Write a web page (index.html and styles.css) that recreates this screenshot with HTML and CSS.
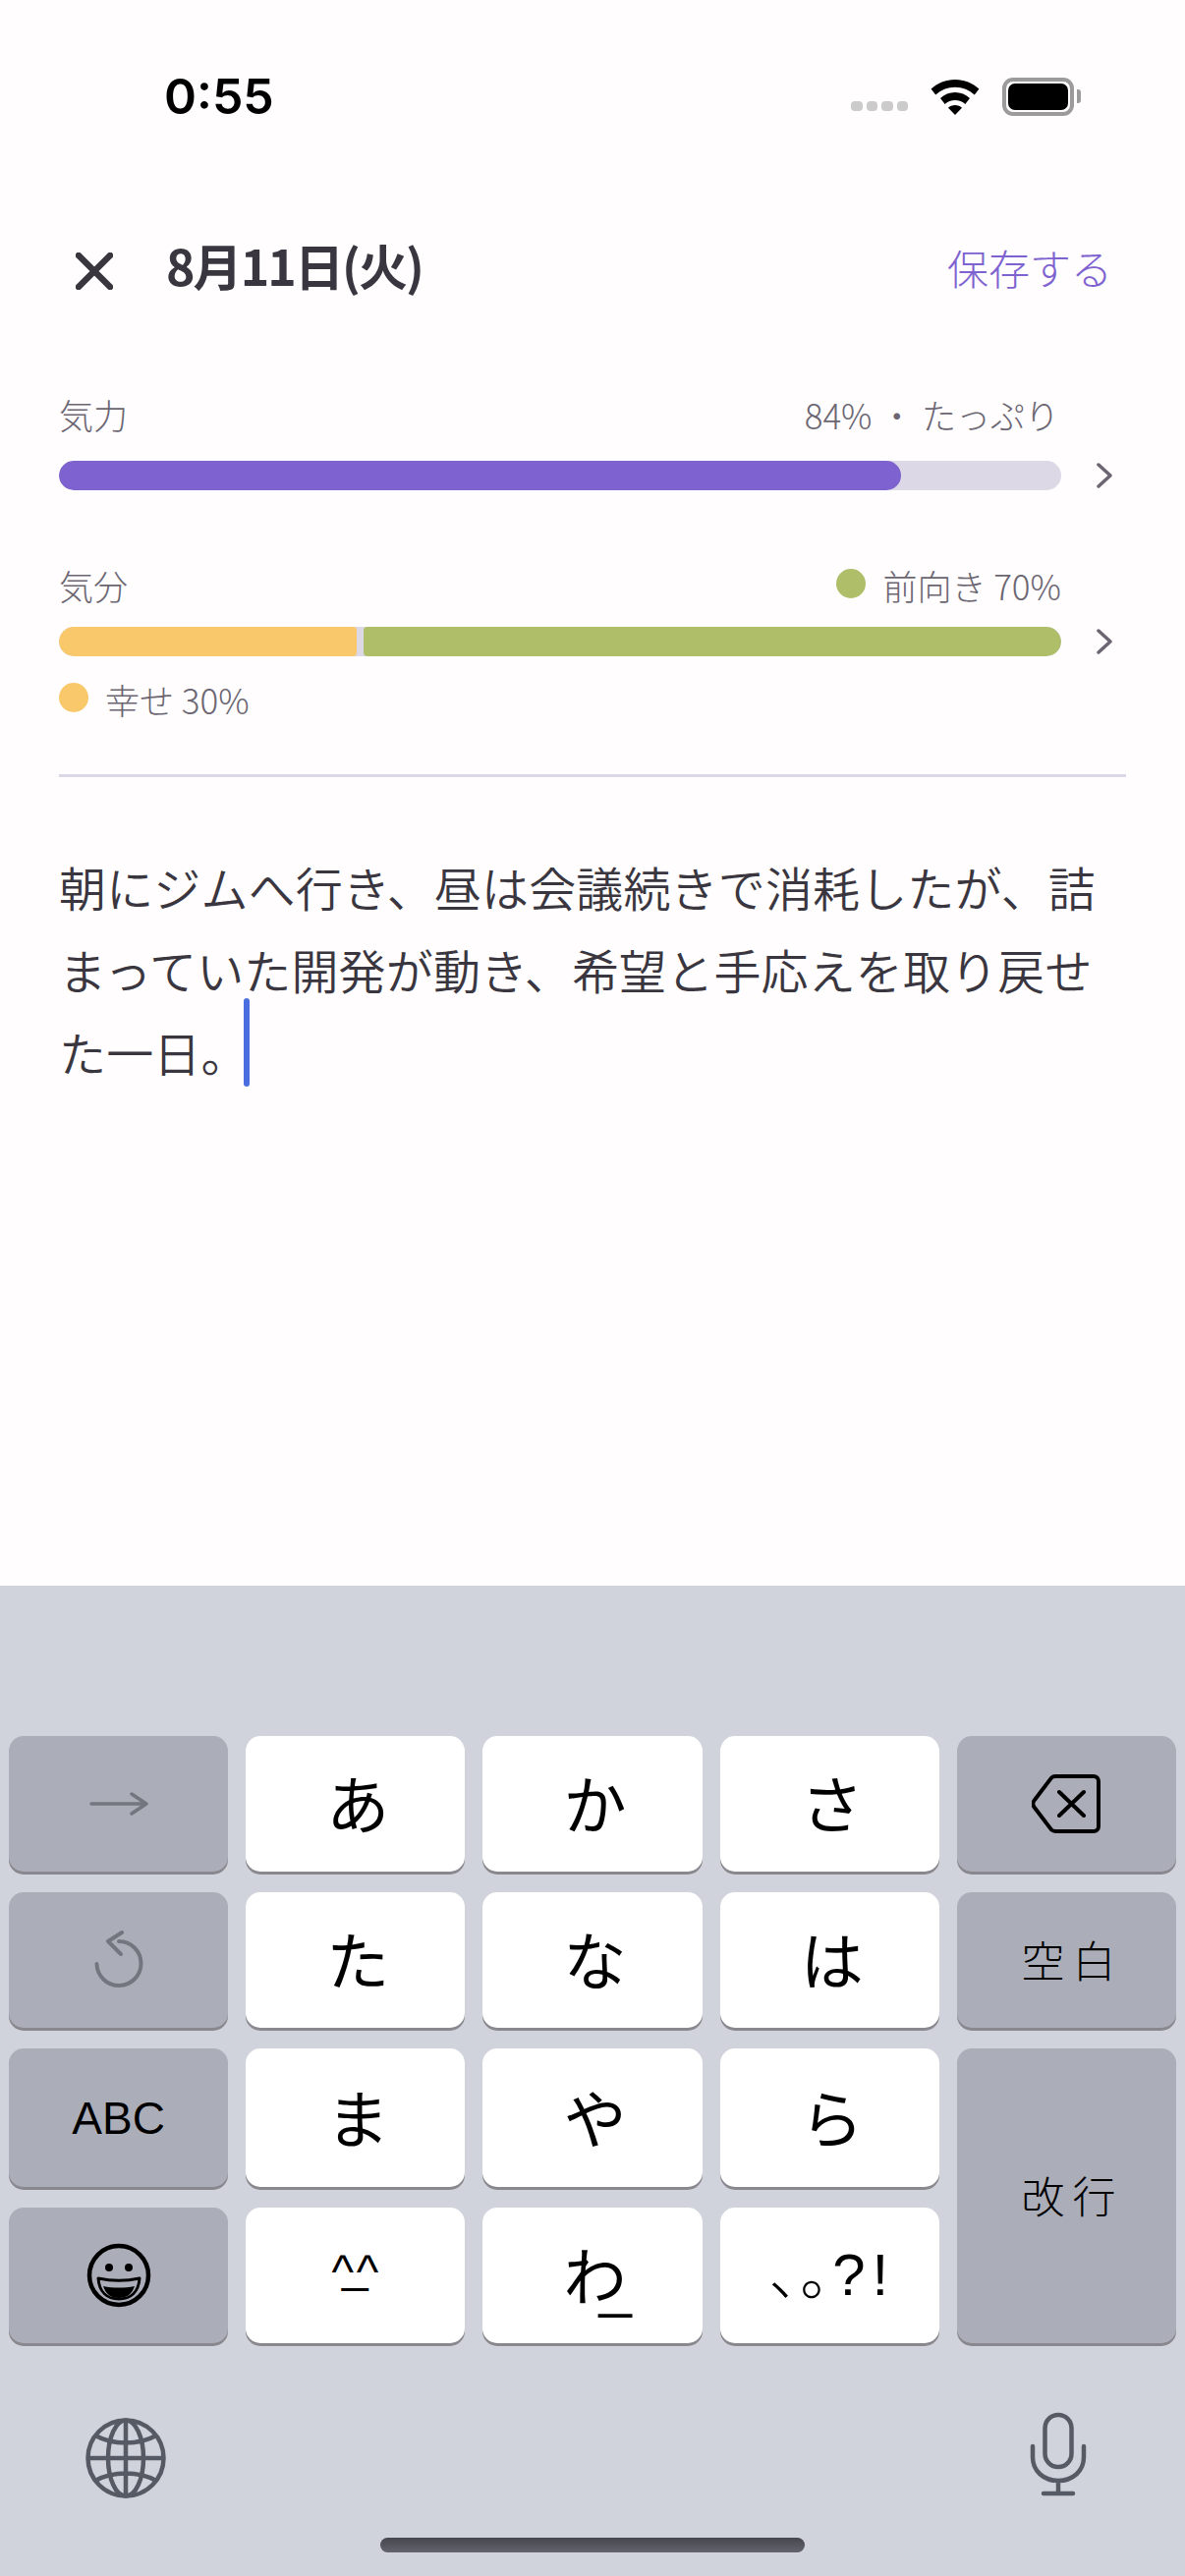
FILE: index.html
```html
<!DOCTYPE html>
<html lang="ja">
<head>
<meta charset="utf-8">
<title>8月11日(火)</title>
<link rel="stylesheet" href="styles.css">
</head>
<body>
<div class="screen">
  <div class="status">
    <span class="time">0:55</span>
    <div class="status-icons">
      <div class="signal"><i></i><i></i><i></i><i></i></div>
      <svg class="wifi" width="50" height="38" viewBox="0 0 50 38"><path d="M25 2C15.5 2 7 5.7.6 11.6l4.6 6C10.4 12.7 17.3 9.7 25 9.7s14.600 3 19.800 7.900l4.600-6C43 5.700 34.500 2 25 2zM25 15c-5.800 0-11 2.200-15 5.900l4.700 6c2.700-2.400 6.300-3.900 10.300-3.900s7.600 1.500 10.300 3.900l4.700-6C36 17.200 30.800 15 25 15zM25 28c-2.700 0-5.200 1-7 2.700L25 38l7-7.300C30.200 29 27.700 28 25 28z" fill="#000"/></svg>
      <div class="battery"><div class="battery-body"><div class="battery-level"></div></div><div class="battery-nub"></div></div>
    </div>
  </div>
  <header class="head">
    <svg class="close" width="38" height="38" viewBox="0 0 38 38"><path d="M3 3l32 32M35 3L3 35" stroke="#3a3640" stroke-width="6.500" stroke-linecap="round" fill="none"/></svg>
    <h1 class="title">8月11日(火)</h1>
    <span class="save">保存する</span>
  </header>
  <main class="content">
    <section class="metric first">
      <div class="labels"><span>気力</span><span class="energy-val">84% ・ たっぷり</span></div>
      <div class="bar-row">
        <div class="bar"><div class="seg purple" style="width:84%"></div></div>
        <svg class="chev" width="16" height="26" viewBox="0 0 16 26"><path d="M2 2l12 11L2 24" stroke="#6b6672" stroke-width="3.500" fill="none" stroke-linecap="round" stroke-linejoin="round"/></svg>
      </div>
    </section>
    <section class="metric second">
      <div class="labels tight"><span>気分</span><span class="legend"><i class="dot green"></i>前向き 70%</span></div>
      <div class="bar-row">
        <div class="bar split"><div class="seg yellow" style="width:303px"></div><div class="seg green rest"></div></div>
        <svg class="chev" width="16" height="26" viewBox="0 0 16 26"><path d="M2 2l12 11L2 24" stroke="#6b6672" stroke-width="3.500" fill="none" stroke-linecap="round" stroke-linejoin="round"/></svg>
      </div>
      <div class="labels below"><span class="legend"><i class="dot yellow"></i>幸せ 30%</span></div>
    </section>
    <hr class="rule">
    <p class="note">朝にジムへ行き、昼は会議続きで消耗したが、詰まっていた開発が動き、希望と手応えを取り戻せた一日。<span class="caret"></span></p>
  </main>
  <div class="keyboard">
    <div class="keys">
      <div class="key fn"><svg width="60" height="24" viewBox="0 0 60 24"><path d="M2 12h55M43 2l15 10-15 10" stroke="#74767f" stroke-width="3.500" fill="none" stroke-linecap="round" stroke-linejoin="round"/></svg></div>
      <div class="key">あ</div>
      <div class="key">か</div>
      <div class="key">さ</div>
      <div class="key fn"><svg width="70" height="60" viewBox="0 0 70 60"><path d="M24 2h39a5 5 0 0 1 5 5v46a5 5 0 0 1-5 5H24a6 6 0 0 1-4-1.600L3 34a6 6 0 0 1 0-8L20 3.600A6 6 0 0 1 24 2zM28 18l25 24M53 18L28 42" stroke="#000" stroke-width="4" fill="none" stroke-linecap="round" stroke-linejoin="round"/></svg></div>
      <div class="key fn"><svg width="50" height="60" viewBox="0 0 50 60"><path d="M25 11a22.500 22.500 0 1 1-22.500 23M28 2L14 11l13 13" stroke="#74767f" stroke-width="4" fill="none" stroke-linecap="round" stroke-linejoin="round"/></svg></div>
      <div class="key">た</div>
      <div class="key">な</div>
      <div class="key">は</div>
      <div class="key fn small">空白</div>
      <div class="key fn abc">ABC</div>
      <div class="key">ま</div>
      <div class="key">や</div>
      <div class="key">ら</div>
      <div class="key fn small enter">改行</div>
      <div class="key fn emoji"><svg width="66" height="66" viewBox="0 0 66 66"><circle cx="33" cy="33" r="30" stroke="#000" stroke-width="4.500" fill="none"/><circle cx="23" cy="25" r="4" fill="#000"/><circle cx="43" cy="25" r="4" fill="#000"/><path d="M12 36c14 3 28 3 42 0-1 14-9 21-21 21S13 50 12 36z" stroke="#000" stroke-width="3" fill="none" stroke-linejoin="round"/><path d="M17 44c10 2 22 2 32 0-3 9-9 12-16 12s-13-3-16-12z" fill="#000"/></svg></div>
      <div class="key"><span class="kao">^<span class="kao-bar">_</span>^</span></div>
      <div class="key"><span class="wa">わ<span class="wa-bar">_</span></span></div>
      <div class="key"><span class="punct"><span class="punct-kana">、。</span>?!</span></div>
    </div>
    <div class="tools">
      <svg width="82" height="82" viewBox="0 0 82 82"><g stroke="#565a65" stroke-width="4.500" fill="none"><circle cx="41" cy="41" r="38.500"/><ellipse cx="41" cy="41" rx="18" ry="38.500"/><path d="M41 2.500v77M2.500 41h77M10 18c18 10 44 10 62 0M10 64c18-10 44-10 62 0"/></g></svg>
      <svg class="mic" width="58" height="86" viewBox="0 0 58 86"><g stroke="#565a65" stroke-width="4.500" fill="none" stroke-linecap="round"><rect x="15.500" y="3" width="27" height="53" rx="13.500"/><path d="M3 35v11c0 14 11 24 26 24s26-10 26-24V35M29 70v13M14 83h30"/></g></svg>
    </div>
    <div class="home"></div>
  </div>
</div>
</body>
</html>
```

FILE: styles.css
```css
* { box-sizing: border-box; }
html, body { margin: 0; padding: 0; }
body { background: #fffdfe; font-family: "Noto Sans CJK JP", "Noto Sans", sans-serif; }
.screen { width: 1206px; height: 2622px; display: flex; flex-direction: column; overflow: hidden; }

.status { height: 196px; display: flex; align-items: center; justify-content: space-between; padding: 0 106px 0 167px; }
.time { font-family: Inter, "Liberation Sans", sans-serif; font-weight: 600; font-size: 50px; line-height: 1; color: #000; }
.status-icons { display: flex; align-items: center; }
.signal { display: flex; gap: 4px; margin: 20px 23px 0 0; }
.signal i { width: 11.500px; height: 10px; border-radius: 4px; background: #cbcbcb; }
.wifi { display: block; margin-right: 23px; }
.battery { display: flex; align-items: center; }
.battery-body { width: 73px; height: 39px; border: 4px solid #9b9b9b; border-radius: 11px; padding: 2px; }
.battery-level { width: 100%; height: 100%; background: #000; border-radius: 7px; }
.battery-nub { width: 4px; height: 14px; margin-left: 3px; background: #9b9b9b; border-radius: 0 3px 3px 0; }

.head { height: 152px; display: flex; align-items: center; padding: 0 74px 0 77px; }
.close { display: block; flex: none; margin: 8px 54px 0 0; }
.title { margin: 0 0 6px; font-size: 50px; font-weight: 700; line-height: 1.2; color: #3a3640; letter-spacing: -1.900px; flex: 1; }
.save { font-size: 42px; font-weight: 300; color: #7d62d0; line-height: 1.2; }

.content { flex: 1; padding: 52px 60px 0; }
.labels { display: flex; justify-content: space-between; height: 44px; line-height: 44px; font-size: 35px; font-weight: 300; color: #6b6672; margin-bottom: 25px; padding-right: 66px; }
.labels.tight { margin-bottom: 20px; }
.labels.below { margin: 22px 0 0; }
.energy-val { margin-right: 2px; }
.legend { display: flex; align-items: center; gap: 17px; }
.dot { display: block; width: 30px; height: 30px; border-radius: 50%; margin-top: -4px; }
.dot.green { background: #afbe69; }
.dot.yellow { background: #f8c86a; }
.bar-row { display: flex; align-items: center; }
.bar { width: 1020px; height: 30px; border-radius: 15px; background: #dcd8e6; display: flex; overflow: hidden; }
.chev { display: block; margin-left: 36px; }
.seg { height: 100%; border-radius: 15px; }
.seg.purple { background: #7d62d0; }
.seg.yellow { background: #f8c86a; border-radius: 15px 4px 4px 15px; }
.seg.green { background: #afbe69; }
.seg.rest { flex: 1; margin-left: 7px; border-radius: 4px 15px 15px 4px; }
.metric.second { margin-top: 75px; }
.rule { border: 0; height: 3px; margin: 54px 0 0; background: #dad7e6; }
.note { margin: 69px 0 0; font-size: 48px; line-height: 84px; font-weight: 350; letter-spacing: .15px; color: #3a3640; }
.caret { display: inline-block; position: relative; top: -17px; width: 6px; height: 90px; margin: -20px 0 -20px -5px; vertical-align: middle; border-radius: 3px; background: #4a6ee0; }

.keyboard { height: 1008px; flex: none; background: #d0d3db; padding: 153px 9px 0; position: relative; }
.keys { display: grid; grid-template-columns: repeat(5, 1fr); grid-template-rows: 138px 138px 141px 138px; gap: 21px 18px; }
.key { background: #fff; border-radius: 15px; box-shadow: 0 3px 0 #88888e; display: flex; align-items: center; justify-content: center; font-size: 64px; font-weight: 400; color: #000; line-height: 1; padding: 0 0 6px 5px; }
.key.fn { background: #abaeb9; padding: 0; }
.key.small { font-size: 44px; font-weight: 300; letter-spacing: 8px; text-indent: 12px; padding-bottom: 3px; }
.key.abc { font-family: "Liberation Sans", sans-serif; font-size: 46px; font-weight: 400; }
.enter { grid-column: 5; grid-row: 3 / span 2; }
.kao { font-family: "Liberation Sans", sans-serif; font-size: 48px; letter-spacing: -12px; margin-left: -18px; }
.kao-bar { position: relative; top: -7px; }
.wa { position: relative; }
.wa-bar { position: absolute; left: 36px; top: 16px; font-family: "Liberation Sans", sans-serif; font-size: 60px; line-height: 1; }
.punct { font-family: "Liberation Sans", sans-serif; font-size: 60px; letter-spacing: 7px; }
.punct-kana { font-family: "Noto Sans CJK JP", sans-serif; font-size: 60px; font-weight: 300; letter-spacing: -28px; margin-right: 1px; text-spacing-trim: space-all; }

.tools { display: flex; justify-content: space-between; align-items: center; padding: 76px 91px 0 78px; }
.tools svg { display: block; }
.tools .mic { margin-top: -8px; }
.home { position: absolute; left: 387px; top: 969px; width: 432px; height: 15px; border-radius: 8px; background: linear-gradient(180deg, #45464e 0, #62636b 100%); }
```
